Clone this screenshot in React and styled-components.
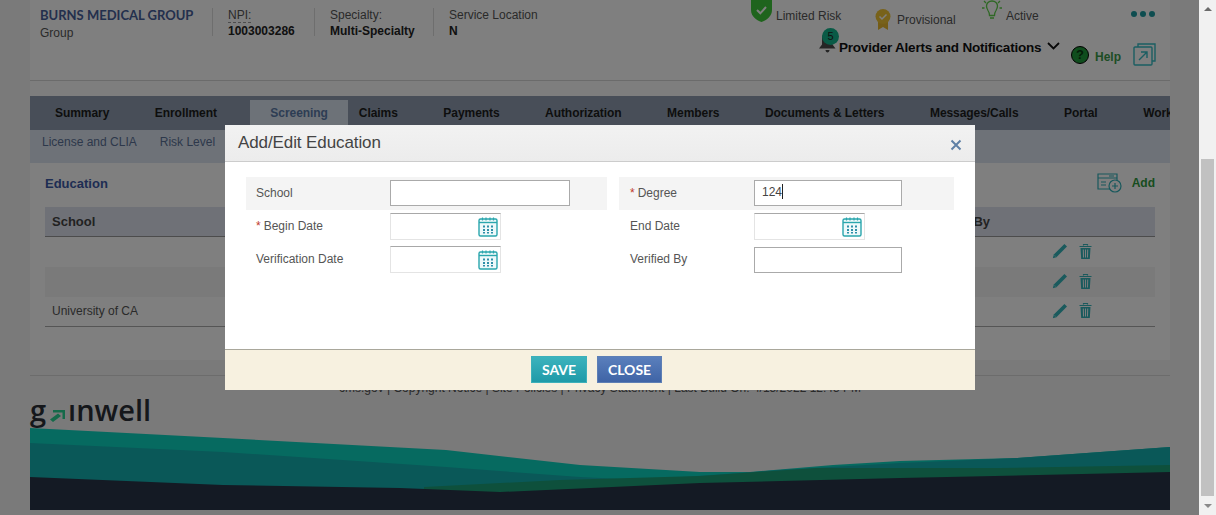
import React from "react";
import styled, { createGlobalStyle } from "styled-components";

const GlobalStyle = createGlobalStyle`
  html, body {
    margin: 0;
    padding: 0;
    height: 515px;
    overflow: hidden;
    font-family: "Liberation Sans", Arial, sans-serif;
    font-size: 12px;
    color: #333;
  }
`;

const Shell = styled.div`
  display: flex;
  width: 1216px;
  height: 515px;
  overflow: hidden;
`;

const Page = styled.div`
  position: relative;
  width: 1199px;
  height: 515px;
  padding: 0 29px 0 30px;
  box-sizing: border-box;
  background: #f4f4f4;
  overflow: hidden;
`;

// native looking scrollbar on the right
const ScrollBar = styled.div`
  width: 17px;
  height: 515px;
  background: #f1f1f1;
  display: flex;
  flex-direction: column;
  align-items: center;
  justify-content: space-between;
`;

const ScrollArrow = styled.div`
  width: 0;
  height: 0;
  margin: 7px 0;
  border-left: 4px solid transparent;
  border-right: 4px solid transparent;
  ${(p) => (p.$down ? "border-top: 4px solid #8a8a8a;" : "border-bottom: 4px solid #6a6a6a;")}
`;

const ScrollThumb = styled.div`
  width: 13px;
  height: 337px;
  margin-top: 139px;
  background: #c1c1c1;
`;

const Header = styled.div`
  display: flex;
  justify-content: space-between;
  height: 80px;
  padding: 0 15px 0 10px;
  background: #fff;
  border-bottom: 1px solid #d6d6d6;
`;

const Identity = styled.div`
  display: flex;
  align-items: flex-start;
  padding-top: 8px;
`;

const NameBlock = styled.div`
  width: 172px;
  height: 28px;
  border-right: 1px solid #ddd;
`;

const OrgName = styled.div`
  font-family: "Lato", sans-serif;
  font-weight: 700;
  font-size: 13px;
  line-height: 15px;
  color: #47609a;
`;

const OrgType = styled.div`
  margin-top: 3px;
  line-height: 15px;
  color: #555;
`;

const Fact = styled.div`
  width: ${(p) => p.$width}px;
  height: 28px;
  padding-left: 15px;
  box-sizing: content-box;
  border-right: ${(p) => (p.$last ? "none" : "1px solid #ddd")};
`;

const FactLabel = styled.div`
  display: inline-block;
  line-height: 14px;
  color: #555;
  border-bottom: ${(p) => (p.$dashed ? "1px dashed #999" : "1px solid transparent")};
`;

const FactValue = styled.div`
  margin-top: 1px;
  font-weight: 700;
  line-height: 14px;
  color: #222;
`;

const StatusArea = styled.div`
  width: 404px;
`;

const StatusRow = styled.div`
  display: flex;
  align-items: flex-start;
  height: 29px;
  margin-top: -1px;
`;

const Status = styled.div`
  display: flex;
  align-items: flex-start;
  width: ${(p) => p.$width}px;
  gap: ${(p) => p.$gap}px;
  color: #555;
`;

const StatusText = styled.span`
  padding-top: ${(p) => p.$top}px;
  line-height: 14px;
`;

const StatusIcon = styled.svg`
  flex: none;
  margin-top: ${(p) => p.$top || 0}px;
`;

const Dots = styled.div`
  display: flex;
  gap: 3px;
  margin: 12px 0 0 auto;
`;

const Dot = styled.span`
  width: 6px;
  height: 6px;
  border-radius: 50%;
  background: #1c9aa0;
`;

const AlertRow = styled.div`
  display: flex;
  align-items: flex-start;
  padding-left: 67px;
  white-space: nowrap;
`;

const Bell = styled.div`
  position: relative;
  flex: none;
  width: 21px;
  height: 30px;
  margin-left: 1px;
`;

const Badge = styled.span`
  position: absolute;
  left: 3px;
  top: 0;
  width: 17px;
  height: 17px;
  border-radius: 50%;
  background: #12b48c;
  font-size: 11px;
  line-height: 17px;
  text-align: center;
  color: #222;
`;

const AlertTitle = styled.span`
  width: 202px;
  margin: 11px 0 0 -1px;
  font-size: 13.5px;
  font-weight: 700;
  line-height: 18px;
  color: #111;
  letter-spacing: -0.22px;
`;

const Chevron = styled.svg`
  flex: none;
  margin: 14px 11px 0 6px;
`;

const HelpMark = styled.span`
  flex: none;
  width: 16px;
  height: 16px;
  margin-top: 18px;
  border: 1px solid #000;
  border-radius: 50%;
  background: #1f9a3a;
  font-size: 13px;
  font-weight: 700;
  line-height: 16px;
  text-align: center;
  color: #0a3a10;
`;

const HelpLink = styled.span`
  margin: 22px 12px 0 6px;
  font-weight: 700;
  line-height: 14px;
  color: #3a9a4a;
`;

const ExternalIcon = styled.svg`
  flex: none;
  margin-top: 15px;
`;

const Spacer = styled.div`
  height: 15px;
  background: #fdfdfd;
`;

const TabBar = styled.div`
  display: flex;
  align-items: flex-end;
  gap: 45.5px;
  height: 34px;
  padding-left: 25px;
  background: #909cb0;
  overflow: hidden;
  white-space: nowrap;
`;

const Tab = styled.div`
  flex: none;
  height: ${(p) => (p.$active ? "30px" : "34px")};
  line-height: ${(p) => (p.$active ? "26px" : "34px")};
  font-weight: 700;
  letter-spacing: -0.06px;
  color: ${(p) => (p.$active ? "#5a7ba8" : "#1c1c1c")};
  ${(p) => p.$active && "padding: 0 20px; margin: 0 -34.5px 0 -12px; background: #dbe4f0;"}
`;

const SubBar = styled.div`
  display: flex;
  gap: 23px;
  height: 33px;
  padding-left: 12px;
  background: #dde5f0;
  line-height: 25px;
  color: #5a7197;
`;

const Section = styled.div`
  height: 197px;
  padding: 0 15px;
  background: #fff;
`;

const SectionHead = styled.div`
  display: flex;
  align-items: center;
  height: 40px;
  padding-bottom: 4px;
`;

const SectionTitle = styled.div`
  font-size: 13px;
  font-weight: 700;
  color: #3c5aa6;
`;

const AddLink = styled.div`
  display: flex;
  align-items: center;
  gap: 10px;
  margin: 0 0 0 auto;
  font-weight: 700;
  color: #2f9a3f;
`;

const TableHead = styled.div`
  display: flex;
  justify-content: space-between;
  height: 29px;
  padding-left: 7px;
  background: #dfe3ee;
  border-bottom: 1px solid #999;
  font-size: 13px;
  font-weight: 700;
  line-height: 29px;
  color: #444;
`;

const VerifiedHead = styled.span`
  margin-right: 165px;
`;

const TableRow = styled.div`
  display: flex;
  align-items: center;
  height: 30px;
  padding-left: 7px;
  box-sizing: border-box;
  background: ${(p) => (p.$striped ? "#f5f5f5" : "#fff")};
  border-bottom: ${(p) => (p.$last ? "1px solid #aaa" : "none")};
  color: #555;
`;

const RowText = styled.span`
  margin-top: -2px;
`;

const RowActions = styled.div`
  display: flex;
  align-items: center;
  gap: 11px;
  margin: -2px 63px 0 auto;
`;

const FooterLine = styled.div`
  height: 12px;
  margin-top: 15px;
  border-top: 1px solid #d8d8d8;
`;

const FooterLinks = styled.div`
  height: 10px;
  text-align: center;
  line-height: 0;
  color: #555;
`;

const Logo = styled.div`
  display: flex;
  align-items: flex-start;
  height: 30px;
  font-family: "Open Sans", sans-serif;
  font-weight: 600;
  font-size: 29px;
  line-height: 24px;
  color: #2a2f36;
`;

const LogoArrow = styled.svg`
  flex: none;
  margin: 12px 3px 0 3px;
`;

const Wave = styled.svg`
  display: block;
`;

const Backdrop = styled.div`
  position: absolute;
  inset: 0;
  display: flex;
  justify-content: center;
  align-items: flex-start;
  padding: 125px 0 0 1px;
  background: rgba(0, 0, 0, 0.5);
`;

const Modal = styled.div`
  width: 750px;
  height: 265px;
  display: flex;
  flex-direction: column;
  background: #fff;
`;

const ModalHead = styled.div`
  display: flex;
  align-items: center;
  justify-content: space-between;
  height: 36px;
  padding: 0 13px 0 13px;
  background: linear-gradient(#f2f2f2, #ececec);
  border-bottom: 1px solid #ccc;
`;

const ModalTitle = styled.div`
  font-size: 17px;
  letter-spacing: -0.1px;
  color: #444;
`;

const CloseX = styled.svg`
  margin-top: 3px;
`;

const ModalBody = styled.div`
  flex: 1;
  display: grid;
  grid-template-columns: 361px 335px;
  column-gap: 12px;
  align-content: start;
  padding: 15px 21px 0;
`;

const FieldColumn = styled.div`
  display: flex;
  flex-direction: column;
`;

const FieldRow = styled.div`
  display: flex;
  align-items: flex-start;
  height: 33px;
  box-sizing: border-box;
  padding: 3px 0 0 ${(p) => p.$pad}px;
  background: ${(p) => (p.$shaded ? "#f4f4f4" : "transparent")};
`;

const FieldLabel = styled.label`
  width: ${(p) => p.$width}px;
  padding-top: 6px;
  line-height: 14px;
  color: #555;
`;

const Star = styled.span`
  color: #c0392b;
  margin-right: 3px;
`;

const TextBox = styled.div`
  width: ${(p) => p.$width}px;
  height: 26px;
  margin-top: ${(p) => p.$top || 0}px;
  box-sizing: border-box;
  padding-left: 7px;
  background: #fff;
  border: 1px solid #aaa;
  line-height: 23px;
  color: #444;
`;

const Caret = styled.span`
  display: inline-block;
  width: 1px;
  height: 15px;
  vertical-align: -3px;
  background: #222;
`;

const DateBox = styled.div`
  display: flex;
  align-items: center;
  justify-content: flex-end;
  width: 111px;
  height: 27px;
  box-sizing: border-box;
  padding-right: 1px;
  background: #fff;
  border: 1px solid #e4e4e4;
  border-top-color: #a8a8a8;
`;

const ModalFoot = styled.div`
  display: flex;
  justify-content: center;
  align-items: flex-start;
  gap: 10px;
  height: 41px;
  box-sizing: border-box;
  padding: 6px 7px 0 0;
  background: #f7f1e0;
  border-top: 1px solid #a9a79b;
`;

const FootButton = styled.button`
  height: 27px;
  width: ${(p) => p.$width}px;
  padding: 0;
  border: 1px solid ${(p) => (p.$blue ? "#5d7fb5" : "#3cb0ba")};
  background: ${(p) =>
    p.$blue
      ? "linear-gradient(#5a7fbc, #3f64a6)"
      : "linear-gradient(#3cb3bd, #1f9aa8)"};
  font-family: "Lato", sans-serif;
  font-size: 14px;
  font-weight: 700;
  color: #fff;
`;

const tabs = [
  "Summary",
  "Enrollment",
  "Screening",
  "Claims",
  "Payments",
  "Authorization",
  "Members",
  "Documents & Letters",
  "Messages/Calls",
  "Portal",
  "Work",
];

const CalendarIcon = () => (
  <svg width="22" height="22" viewBox="0 0 22 22">
    <rect x="2" y="3" width="18" height="17" rx="1.5" fill="#eef9fa" stroke="#2aa6ad" strokeWidth="1.4" />
    <path d="M2 6.5h18" stroke="#2aa6ad" strokeWidth="1.4" />
    <path d="M5.5 1.5v3M9 1.5v3M13 1.5v3M16.5 1.5v3" stroke="#2aa6ad" strokeWidth="1.2" />
    <path
      d="M6 9.5h2v2H6zM10 9.5h2v2h-2zM14 9.5h2v2h-2zM6 13h2v2H6zM10 13h2v2h-2zM14 13h2v2h-2zM6 16h2v1.6H6zM10 16h2v1.6h-2zM14 16h2v1.6h-2z"
      fill="#2e8fa8"
    />
  </svg>
);

const PencilIcon = () => (
  <svg width="16" height="16" viewBox="0 0 16 16">
    <path d="M.8 15.200l1-3.600L12.400 1l2.600 2.600L4.400 14.200z" fill="#34b4ba" />
    <path d="M1.800 11.600l2.600 2.600" stroke="#9ad8da" strokeWidth="0.6" />
  </svg>
);

const TrashIcon = () => (
  <svg width="13" height="15" viewBox="0 0 13 15">
    <path d="M4.500 1.500V.5h4v1M.5 2.500h12" stroke="#34b4ba" strokeWidth="1.200" fill="none" />
    <path
      d="M1.500 4h10l-.7 11H2.200zM3.800 5.500l.2 8h1l-.2-8zM6 5.500v8h1v-8zM8.200 5.500l-.2 8h1l.2-8z"
      fill="#34b4ba"
      fillRule="evenodd"
    />
  </svg>
);

const EducationRow = ({ school, striped, last }) => (
  <TableRow $striped={striped} $last={last}>
    <RowText>{school}</RowText>
    <RowActions>
      <PencilIcon />
      <TrashIcon />
    </RowActions>
  </TableRow>
);

const App = () => {
  return (
    <Shell>
      <GlobalStyle />
      <Page>
        <Header>
          <Identity>
            <NameBlock>
              <OrgName>BURNS MEDICAL GROUP</OrgName>
              <OrgType>Group</OrgType>
            </NameBlock>
            <Fact $width={86}>
              <FactLabel $dashed>NPI:</FactLabel>
              <FactValue>1003003286</FactValue>
            </Fact>
            <Fact $width={103}>
              <FactLabel>Specialty:</FactLabel>
              <FactValue>Multi-Specialty</FactValue>
            </Fact>
            <Fact $width={120} $last>
              <FactLabel>Service Location</FactLabel>
              <FactValue>N</FactValue>
            </Fact>
          </Identity>
          <StatusArea>
            <StatusRow>
              <Status $width={124} $gap={4}>
                <StatusIcon width="21" height="23" viewBox="0 0 21 23">
                  <path d="M0 0h21v11c0 6-5 10-10.500 12C5 21 0 17 0 11z" fill="#3ec93a" />
                  <path d="M6 11l3.300 3.300L15 8" stroke="#fff" strokeWidth="2" fill="none" />
                </StatusIcon>
                <StatusText $top={10}>Limited Risk</StatusText>
              </Status>
              <Status $width={107} $gap={6}>
                <StatusIcon $top={10} width="16" height="21" viewBox="0 0 16 21">
                  <path d="M3 11v10l5-3 5 3V11z" fill="#e8b92e" />
                  <circle cx="8" cy="7.500" r="7.500" fill="#f0c435" />
                  <path d="M4.500 7.500l2.500 2.500 4.500-4.500" stroke="#fff" strokeWidth="1.500" fill="none" />
                </StatusIcon>
                <StatusText $top={14}>Provisional</StatusText>
              </Status>
              <Status $width={80} $gap={4}>
                <StatusIcon width="20" height="22" viewBox="0 0 20 22" fill="none" stroke="#5ed04a" strokeWidth="1.300">
                  <path d="M6 3.500c2-2 6-2 8 0 2.500 2.500 1.500 5.500 0 8-1 1.500-1.500 3-1.500 5h-5c0-2-.5-3.500-1.500-5-1.500-2.500-2.500-5.500 0-8zM8 19h4" />
                  <path d="M2 2l2 2M18 2l-2 2M0 9h2.500M17.500 9H20" />
                </StatusIcon>
                <StatusText $top={10}>Active</StatusText>
              </Status>
              <Dots>
                <Dot />
                <Dot />
                <Dot />
              </Dots>
            </StatusRow>
            <AlertRow>
              <Bell>
                <svg width="17" height="27" viewBox="0 0 17 27">
                  <path
                    d="M8.500 4c3.500 0 5 3 5 6.500v6l3 4H0l3-4v-6C3 7 5 4 8.500 4zM6.500 22h4c0 1.500-1 2.500-2 2.500s-2-1-2-2.500z"
                    fill="#4a4a4a"
                  />
                </svg>
                <Badge>5</Badge>
              </Bell>
              <AlertTitle>Provider Alerts and Notifications</AlertTitle>
              <Chevron width="13" height="8" viewBox="0 0 13 8">
                <path d="M1 1l5.500 5.500L12 1" stroke="#111" strokeWidth="1.800" fill="none" />
              </Chevron>
              <HelpMark>?</HelpMark>
              <HelpLink>Help</HelpLink>
              <ExternalIcon width="23" height="23" viewBox="0 0 23 23" fill="none" stroke="#36bcc4" strokeWidth="1.400">
                <path d="M5 4V1h17v17h-3" />
                <rect x="1" y="4" width="18" height="18" rx="1" />
                <path d="M6 17l8-8M8 9h6v6" />
              </ExternalIcon>
            </AlertRow>
          </StatusArea>
        </Header>
        <Spacer />
        <TabBar>
          {tabs.map((tab) => (
            <Tab key={tab} $active={tab === "Screening"}>
              {tab}
            </Tab>
          ))}
        </TabBar>
        <SubBar>
          <span>License and CLIA</span>
          <span>Risk Level</span>
        </SubBar>
        <Section>
          <SectionHead>
            <SectionTitle>Education</SectionTitle>
            <AddLink>
              <svg width="25" height="20" viewBox="0 0 25 20" fill="none" stroke="#2fb0b8" strokeWidth="1.200">
                <path d="M14 16H1V1h19v8" />
                <path d="M1 5h19M4 9h5M4 12h5M12 3h5" />
                <circle cx="18" cy="13" r="6" fill="#fff" />
                <path d="M18 10v6M15 13h6" />
              </svg>
              Add
            </AddLink>
          </SectionHead>
          <TableHead>
            <span>School</span>
            <VerifiedHead>Verified By</VerifiedHead>
          </TableHead>
          <EducationRow school="" />
          <EducationRow school="" striped />
          <EducationRow school="University of CA" last />
        </Section>
        <FooterLine />
        <FooterLinks>
          cms.gov | Copyright Notice | Site Policies | Privacy Statement | Last Build On: 4/15/2022 12:45 PM
        </FooterLinks>
        <Logo>
          g
          <LogoArrow width="16" height="12" viewBox="0 0 16 12">
            <path d="M4 0h12v2.500H4zM13.500 2.500H16V9h-2.500zM9 3.500l3 2.500-8 6-3-2.500z" fill="#2cd494" />
          </LogoArrow>
          ınwell
        </Logo>
        <Wave width="1140" height="82" viewBox="30 428 1140 82">
          <path d="M30 428 L223 438 L446 450 L580 465 L700 472 L750 472 L833 465 L900 461 L1017 458 L1170 447 V510 H30 Z" fill="#0cd4c0" />
          <path d="M30 443 L223 452 L446 467 L580 477 L640 480 L780 470 L900 463 L1017 458 L1170 447 V510 H30 Z" fill="#14b0b0" />
          <path d="M424 487 L560 480 L700 476 L817 468 L1000 468 L1170 465 V510 H424 Z" fill="#1ca078" />
          <path d="M30 477 L223 485 L400 488 L500 492 L700 483 L900 478 L1170 472 V510 H30 Z" fill="#283448" />
        </Wave>
        <Backdrop>
          <Modal>
            <ModalHead>
              <ModalTitle>Add/Edit Education</ModalTitle>
              <CloseX width="12" height="12" viewBox="0 0 12 12">
                <path d="M1.500 1.500l9 9M10.500 1.500l-9 9" stroke="#5f80a6" strokeWidth="2" />
              </CloseX>
            </ModalHead>
            <ModalBody>
              <FieldColumn>
                <FieldRow $shaded $pad={10}>
                  <FieldLabel $width={134}>School</FieldLabel>
                  <TextBox $width={180} />
                </FieldRow>
                <FieldRow $pad={10}>
                  <FieldLabel $width={134}>
                    <Star>*</Star>Begin Date
                  </FieldLabel>
                  <DateBox>
                    <CalendarIcon />
                  </DateBox>
                </FieldRow>
                <FieldRow $pad={10}>
                  <FieldLabel $width={134}>Verification Date</FieldLabel>
                  <DateBox>
                    <CalendarIcon />
                  </DateBox>
                </FieldRow>
              </FieldColumn>
              <FieldColumn>
                <FieldRow $shaded $pad={11}>
                  <FieldLabel $width={124}>
                    <Star>*</Star>Degree
                  </FieldLabel>
                  <TextBox $width={148}>
                    124
                    <Caret />
                  </TextBox>
                </FieldRow>
                <FieldRow $pad={11}>
                  <FieldLabel $width={124}>End Date</FieldLabel>
                  <DateBox>
                    <CalendarIcon />
                  </DateBox>
                </FieldRow>
                <FieldRow $pad={11}>
                  <FieldLabel $width={124}>Verified By</FieldLabel>
                  <TextBox $width={148} $top={1} />
                </FieldRow>
              </FieldColumn>
            </ModalBody>
            <ModalFoot>
              <FootButton $width={56}>SAVE</FootButton>
              <FootButton $width={65} $blue>
                CLOSE
              </FootButton>
            </ModalFoot>
          </Modal>
        </Backdrop>
      </Page>
      <ScrollBar>
        <ScrollArrow />
        <ScrollThumb />
        <ScrollArrow $down />
      </ScrollBar>
    </Shell>
  );
};

export default App;
